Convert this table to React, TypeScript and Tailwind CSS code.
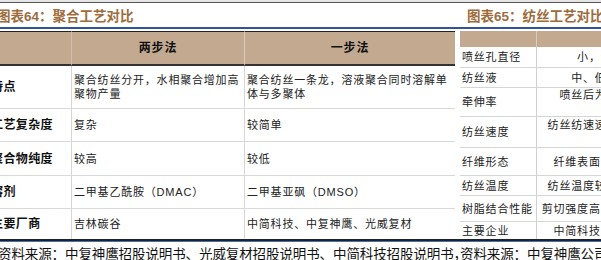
import React from 'react';

const leftRows = [
  {
    label: '特点',
    a: ['聚合纺丝分开，水相聚合增加高', '聚物产量'],
    b: ['聚合纺丝一条龙，溶液聚合同时溶解单', '体与多聚体'],
    h: 'h-[43px]',
  },
  { label: '工艺复杂度', a: ['复杂'], b: ['较简单'], h: 'h-[33px]' },
  { label: '聚合物纯度', a: ['较高'], b: ['较低'], h: 'h-[34px]' },
  { label: '溶剂', a: ['二甲基乙酰胺（DMAC）'], b: ['二甲基亚砜（DMSO）'], h: 'h-[33px]' },
  { label: '主要厂商', a: ['吉林碳谷'], b: ['中简科技、中复神鹰、光威复材'], h: 'h-[30px]' },
];

const rightRows = [
  { label: '喷丝孔直径', v: ['小，约为湿法纺丝的一半'], h: 'h-[21px]' },
  { label: '纺丝液', v: ['中、低黏度的纺丝原液为主'], h: 'h-[20px]' },
  { label: '牵伸率', v: ['喷丝后为空气层，可实现高牵伸', '倍率较高'], h: 'h-[29px]' },
  { label: '纺丝速度', v: ['纺丝纺速速度快，生产效率高于湿法', '纺丝工艺'], h: 'h-[31px]' },
  { label: '纤维形态', v: ['纤维表面光滑，致密性好、缺陷少'], h: 'h-[28px]' },
  { label: '纺丝温度', v: ['纺丝温度较低，需严格控制纺丝温度'], h: 'h-[20px]' },
  { label: '树脂结合性能', v: ['剪切强度高，但与树脂的结合性能略差'], h: 'h-[26px]' },
  { label: '主要企业', v: ['中简科技、中复神鹰、光威复材等'], h: 'h-[17px]' },
];

const Lines = ({ lines }: { lines: string[] }) => (
  <span>
    {lines.map((l, i) => (
      <React.Fragment key={i}>
        {i > 0 && <br />}
        {l}
      </React.Fragment>
    ))}
  </span>
);

export default function App() {
  return (
    <div className="w-[601px] h-[260px] overflow-hidden bg-white text-[#222] font-['Liberation_Sans','Noto_Sans_CJK_SC',sans-serif]">
      {/* top rules */}
      <div className="h-[2px] bg-[#e6e6e6]" />
      <div className="h-px bg-[#555]" />

      {/* titles */}
      <div className="flex h-[24px] items-start pt-[5px] whitespace-nowrap text-[13.5px] leading-[18px] font-bold text-[#9e6c3c]">
        <div className="ml-[-3px] w-[470px] shrink-0">图表64：聚合工艺对比</div>
        <div className="shrink-0">图表65：纺丝工艺对比</div>
      </div>
      <div className="h-[2px] bg-[#2f5597]" />
      <div className="h-[2px]" />

      {/* tables */}
      <div className="flex h-[208px]">
        {/* left table */}
        <div className="ml-[-12px] w-[467px] shrink-0 grid grid-cols-[84px_173px_210px] content-start text-[11px] leading-[14px] tracking-[0.8px]">
          <div className="h-[35px] bg-[#c4a991] border-t border-b-2 border-t-[#222] border-b-[#333] border-r border-r-[#d3bfac]" />
          <div className="h-[35px] bg-[#c4a991] border-t border-b-2 border-t-[#222] border-b-[#333] border-r border-r-[#dccbbb] flex items-center justify-center font-bold text-[12px] text-[#111]">
            两步法
          </div>
          <div className="h-[35px] bg-[#c4a991] border-t border-b-2 border-t-[#222] border-b-[#333] flex items-center justify-center font-bold text-[12px] text-[#111]">
            一步法
          </div>
          {leftRows.map((r, i) => {
            const last = i === leftRows.length - 1;
            const rowB = last ? '' : 'border-b border-b-[#d9d9d9]';
            return (
              <React.Fragment key={r.label}>
                <div className={`${r.h} ${rowB} border-r border-r-[#d6d6d6] flex items-center pl-[3px] whitespace-nowrap font-bold text-[12px] tracking-[0.4px] text-[#111]`}>
                  {r.label}
                </div>
                <div className={`${r.h} ${rowB} border-r border-r-[#d6d6d6] flex items-center pl-[2px] whitespace-nowrap`}>
                  <Lines lines={r.a} />
                </div>
                <div className={`${r.h} ${rowB} flex items-center pl-[2px] whitespace-nowrap`}>
                  <Lines lines={r.b} />
                </div>
              </React.Fragment>
            );
          })}
        </div>

        {/* right table */}
        <div className="ml-[5px] w-[287px] shrink-0 grid grid-cols-[77px_210px] content-start text-[11px] leading-[14px] tracking-[0.8px]">
          <div className="h-[16px] bg-[#c4a991] border-r border-r-[#dccbbb]" />
          <div className="h-[16px] bg-[#c4a991]" />
          {rightRows.map((r, i) => {
            const last = i === rightRows.length - 1;
            const rowB = last ? '' : 'border-b border-b-[#d6d6d6]';
            return (
              <React.Fragment key={r.label}>
                <div className={`${r.h} ${rowB} border-r border-r-[#cfcfcf] flex items-center pl-[2px] whitespace-nowrap`}>
                  {r.label}
                </div>
                <div className={`${r.h} ${rowB} flex items-center justify-center text-center whitespace-nowrap`}>
                  <Lines lines={r.v} />
                </div>
              </React.Fragment>
            );
          })}
        </div>
      </div>

      {/* bottom rules */}
      <div className="h-[2px] bg-[#222]" />
      <div className="h-px bg-[#3f6fb6]" />

      {/* sources */}
      <div className="flex pt-[2px] whitespace-nowrap text-[13.5px] leading-[18px] tracking-[-0.1px] text-[#111] font-['Noto_Sans_CJK_SC',sans-serif]">
        <div className="ml-[-2px] w-[462px] shrink-0">
          资料来源：中复神鹰招股说明书、光威复材招股说明书、中简科技招股说明书，
        </div>
        <div className="shrink-0">资料来源：中复神鹰公司公告，国信证券经济研究所整理</div>
      </div>
    </div>
  );
}
